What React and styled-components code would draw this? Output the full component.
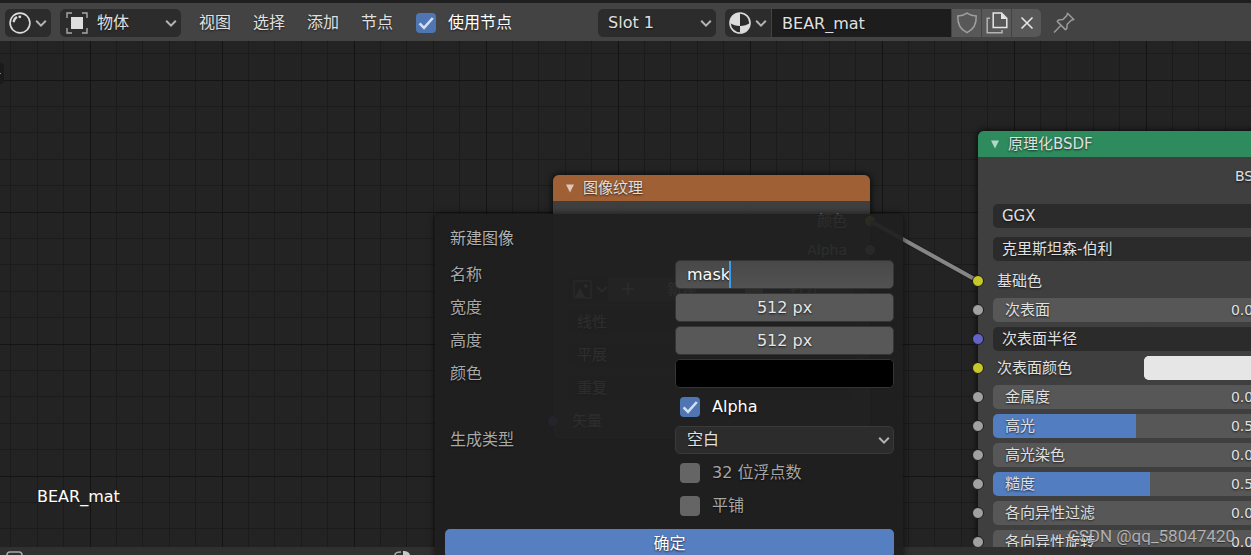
import React, { useState } from 'react';
import styled, { createGlobalStyle } from 'styled-components';

const GlobalStyle = createGlobalStyle`
  *, *::before, *::after {
    box-sizing: border-box;
  }
  body {
    margin: 0;
    background: #1f1f1f;
  }
  body, button, input, select {
    font-family: "DejaVu Sans", "Noto Sans CJK SC", sans-serif;
    font-size: 16px;
    line-height: 20px;
    color: #e0e0e0;
  }
`;

const Page = styled.div`
  position: relative;
  display: flex;
  flex-direction: column;
  height: 100vh;
  padding-top: 3px;
  overflow: hidden;
`;

const Toolbar = styled.header`
  display: flex;
  align-items: center;
  flex: 0 0 38px;
  padding: 2px 5px 0;
  background: #434343;
  text-shadow: 0 1px 2px rgba(0, 0, 0, 0.6);
  white-space: nowrap;
`;

const IconButton = styled.button`
  display: flex;
  align-items: center;
  justify-content: center;
  gap: 4px;
  flex: none;
  width: ${(p) => p.$width || 29}px;
  height: 28px;
  padding: 0;
  border: none;
  border-radius: ${(p) => p.$radius || '0'};
  background: ${(p) => p.$bg || '#585858'};
  color: ${(p) => p.$color || '#dcdcdc'};
`;

const SelectBox = styled.div`
  position: relative;
  flex: none;
  width: ${(p) => p.$width};
  height: 28px;
  margin-left: ${(p) => p.$gap || 0}px;
`;

const Select = styled.select`
  appearance: none;
  width: 100%;
  height: 100%;
  padding: 0 24px 0 ${(p) => p.$indent || 10}px;
  border: 1px solid ${(p) => p.$line || '#2c2c2c'};
  border-radius: 5px;
  background: #2c2c2c;
  text-shadow: inherit;
`;

const SelectArrow = styled.span`
  position: absolute;
  top: 10px;
  right: 4px;
  display: flex;
  pointer-events: none;
`;

const SelectIcon = styled.span`
  position: absolute;
  top: 3px;
  left: 6px;
  display: flex;
  pointer-events: none;
`;

const Menu = styled.nav`
  display: flex;
  gap: 22px;
  margin-left: 18px;
`;

const MenuItem = styled.button`
  padding: 0;
  border: none;
  background: none;
  text-shadow: inherit;
`;

const CheckLabel = styled.label`
  display: flex;
  align-items: center;
  gap: 12px;
  color: ${(p) => (p.$on ? '#ffffff' : '#a6a6a6')};
`;

const ToolbarCheck = styled.div`
  margin-left: 23px;
`;

const CheckBoxWrap = styled.span`
  position: relative;
  display: flex;
  width: 20px;
  height: 20px;
`;

const CheckBox = styled.input`
  appearance: none;
  width: 20px;
  height: 20px;
  margin: 0;
  border-radius: 4px;
  background: #656565;

  &:checked {
    background: #4f76b3;
  }
`;

const CheckMark = styled.svg`
  position: absolute;
  inset: 0;
  pointer-events: none;
`;

const MaterialGroup = styled.div`
  display: flex;
  gap: 1px;
  margin-left: 9px;
`;

const MaterialName = styled.input`
  width: 179px;
  height: 28px;
  padding: 0 10px;
  border: none;
  background: #1d1d1d;
  text-shadow: inherit;
`;

const PinButton = styled(IconButton)`
  margin-left: 8px;
`;

const Canvas = styled.main`
  position: relative;
  flex: 1;
  min-height: 0;
  overflow: hidden;
  background-color: #232323;
  background-image:
    linear-gradient(90deg, #141414 1px, transparent 1px),
    linear-gradient(#141414 1px, transparent 1px),
    linear-gradient(90deg, transparent 26px, #1b1b1b 26px 27px, transparent 27px 52px, #1b1b1b 52px 53px,
      transparent 53px 79px, #1b1b1b 79px 80px, transparent 80px 105px, #1b1b1b 105px 106px, transparent 106px),
    linear-gradient(transparent 26px, #1b1b1b 26px 27px, transparent 27px 52px, #1b1b1b 52px 53px,
      transparent 53px 79px, #1b1b1b 79px 80px, transparent 80px 105px, #1b1b1b 105px 106px, transparent 106px);
  background-size: 132px 132px;
  background-position: 90px 39px;
`;

const SideTab = styled.div`
  position: absolute;
  top: 22px;
  left: 0;
  width: 4px;
  height: 21px;
  border-radius: 0 4px 4px 0;
  background: #1a1a1a;
  overflow: hidden;

  &::after {
    content: "";
    position: absolute;
    top: 10px;
    left: 0;
    width: 1px;
    height: 1px;
    background: #888;
  }
`;

const MaterialCaption = styled.div`
  position: absolute;
  left: 37px;
  bottom: 40px;
  color: #ffffff;
`;

const Wire = styled.svg`
  position: absolute;
  left: 870px;
  top: 179px;
`;

const NodeCard = styled.section`
  position: absolute;
  left: ${(p) => p.$x}px;
  top: ${(p) => p.$y}px;
  width: 317px;
  border-radius: 6px;
  background: rgba(66, 66, 66, 0.93);
  box-shadow: 0 0 6px 1px rgba(0, 0, 0, 0.7);
  font-size: 15px;
  text-shadow: 0 1px 2px rgba(0, 0, 0, 0.7);
`;

const NodeTitle = styled.h2`
  display: flex;
  align-items: center;
  gap: 8px;
  height: 26px;
  margin: 0;
  padding: 0 12px;
  border-radius: 6px 6px 0 0;
  background: ${(p) => p.$color};
  font-size: 15px;
  font-weight: 400;
`;

const NodeBody = styled.div`
  display: flex;
  flex-direction: column;
  gap: 5px;
  padding: 7px 0 16px;
`;

const ImageBody = styled(NodeBody)`
  padding: 8px 0 6px;
`;

const NodeMenus = styled.div`
  display: flex;
  flex-direction: column;
  gap: 9px;
  padding: ${(p) => p.$pad};
`;

const SocketRow = styled.div`
  position: relative;
  display: flex;
  align-items: center;
  justify-content: ${(p) => (p.$output ? 'flex-end' : 'flex-start')};
  height: 24px;
  padding: 0 ${(p) => (p.$output ? 23 : 0)}px 0 ${(p) => p.$indent || 0}px;
`;

const Socket = styled.span`
  position: absolute;
  ${(p) => (p.$output ? 'right' : 'left')}: -6px;
  top: 6px;
  width: 12px;
  height: 12px;
  border: 1px solid #1a1a1a;
  border-radius: 50%;
  background: ${(p) => p.$color};
`;

const NodeSelect = styled.select`
  appearance: none;
  width: 286px;
  height: 24px;
  margin-left: 15px;
  padding: 0 9px;
  border: none;
  border-radius: 5px;
  background: #2b2b2b;
  font-size: 15px;
  text-shadow: inherit;
`;

const Slider = styled.div`
  display: flex;
  align-items: center;
  justify-content: space-between;
  width: 286px;
  height: 24px;
  margin-left: 15px;
  padding: 0 8px 0 12px;
  border-radius: 5px;
  background: linear-gradient(90deg, #527dc0 ${(p) => p.$fill}%, #575757 ${(p) => p.$fill}%);
`;

const LatinText = styled.span`
  font-size: 14px;
`;

const Swatch = styled.input`
  appearance: none;
  width: 135px;
  height: 24px;
  margin-left: auto;
  margin-right: 16px;
  padding: 0;
  border: none;
  border-radius: 5px;
  background: #e6e6e6;

  &::-webkit-color-swatch-wrapper {
    padding: 0;
  }
  &::-webkit-color-swatch {
    border: none;
    border-radius: 5px;
  }
`;

const ImagePicker = styled.div`
  display: flex;
  align-items: center;
  gap: 4px;
  width: 286px;
  height: 24px;
  margin-left: 15px;
  padding-left: 5px;
  border-radius: 5px;
  background: linear-gradient(90deg, #2b2b2b 40px, #575757 40px);
`;

const PickerAction = styled.button`
  display: flex;
  flex: 1;
  align-items: center;
  justify-content: space-between;
  padding: 0 34px 0 10px;
  border: none;
  background: none;
  font-size: 15px;
`;

const Dialog = styled.form`
  position: absolute;
  left: 435px;
  top: 214px;
  display: flex;
  flex-direction: column;
  gap: 4px;
  width: 468px;
  padding: 10px 9px 10px 10px;
  border-radius: 6px;
  background: rgba(31, 31, 31, 0.93);
  box-shadow: 0 0 6px 1px rgba(0, 0, 0, 0.5);
  text-shadow: 0 1px 2px rgba(0, 0, 0, 0.7);
`;

const DialogTitle = styled.h1`
  height: 29px;
  margin: 0 0 3px;
  padding-left: 5px;
  color: #b0b0b0;
  font-size: 16px;
  font-weight: 400;
  line-height: 29px;
`;

const FormRow = styled.div`
  display: grid;
  grid-template-columns: 225px 1fr;
  align-items: center;
  height: 29px;
  padding-left: 5px;
`;

const FormLabel = styled.label`
  color: #a8a8a8;
`;

const FieldBox = styled.div`
  position: relative;
  grid-column: 2;
  height: 29px;
`;

const Field = styled.input`
  width: 100%;
  height: 29px;
  padding: 0 11px;
  border: 1px solid #353535;
  border-radius: 5px;
  outline: none;
  background: ${(p) => (p.$editing ? 'linear-gradient(#484848, #525252)' : '#585858')};
  color: ${(p) => (p.$editing ? '#ffffff' : '#e6e6e6')};
  text-align: ${(p) => (p.$editing ? 'left' : 'center')};
  text-shadow: inherit;
`;

const Caret = styled.span`
  position: absolute;
  top: 1px;
  left: 54px;
  width: 2px;
  height: 27px;
  background: #3d9bea;
`;

const ColorField = styled.input`
  appearance: none;
  display: block;
  width: 100%;
  height: 29px;
  padding: 0;
  border: 1px solid #353535;
  border-radius: 5px;
  background: #000000;

  &::-webkit-color-swatch-wrapper {
    padding: 0;
  }
  &::-webkit-color-swatch {
    border: none;
    border-radius: 4px;
  }
`;

const CheckCell = styled.div`
  grid-column: 2;
  padding-left: 5px;
`;

const ConfirmButton = styled.button`
  height: 29px;
  margin-top: 5px;
  padding: 0;
  border: none;
  border-radius: 5px;
  background: #567fc1;
  color: #ffffff;
  text-shadow: inherit;
`;

const StatusBar = styled.footer`
  display: flex;
  flex: 0 0 8px;
  align-items: flex-end;
  padding-left: 6px;
  gap: 370px;
  background: #303030;
`;

const Watermark = styled.div`
  position: absolute;
  right: 16px;
  bottom: 8px;
  color: rgba(255, 255, 255, 0.6);
  font-family: Roboto, sans-serif;
  font-size: 17px;
  line-height: 22px;
  text-shadow: 0 1px 1px rgba(0, 0, 0, 0.5);
`;

const Chevron = () => (
  <svg width="12" height="9" viewBox="0 0 12 9" fill="none" stroke="#b4b4b4" strokeWidth="2">
    <path d="M1.2 1.8 L6 6.6 L10.8 1.8" />
  </svg>
);

const ShaderIcon = () => (
  <svg width="22" height="22" viewBox="0 0 22 22" fill="none" stroke="#dcdcdc">
    <circle cx="11" cy="11" r="9.9" strokeWidth="1.6" />
    <path d="M4.8 9.2 C5.2 7.6 6 6.4 7.2 5.6" strokeWidth="2.4" strokeLinecap="round" />
    <circle cx="10.8" cy="4.8" r="1.4" fill="#dcdcdc" stroke="none" />
  </svg>
);

const ObjectIcon = () => (
  <svg width="22" height="22" viewBox="0 0 22 22" fill="none">
    <rect x="5" y="5" width="12" height="12" fill="#dedede" />
    <path d="M1 6 V1 H6 M16 1 H21 V6 M21 16 V21 H16 M6 21 H1 V16" stroke="#a8a8a8" strokeWidth="1.4" />
  </svg>
);

const MaterialIcon = () => (
  <svg width="22" height="22" viewBox="0 0 22 22" fill="none">
    <circle cx="11" cy="11" r="10" stroke="#dcdcdc" strokeWidth="1.6" />
    <path d="M11 1 A10 10 0 0 0 1 11 C4 13 7 14 11 14 Z" fill="#dcdcdc" />
    <path d="M11 14 C15 14 18 13 21 11 A10 10 0 0 1 11 21 Z" fill="#dcdcdc" />
  </svg>
);

const ShieldIcon = () => (
  <svg width="22" height="22" viewBox="0 0 22 22" fill="none" stroke="#a0a0a0" strokeWidth="1.5">
    <path d="M11 1.2 C8.5 3 5.2 4 1.8 4 C1.4 12 4.5 17.6 11 20.6 C17.5 17.6 20.6 12 20.2 4 C16.8 4 13.5 3 11 1.2 Z" />
  </svg>
);

const CopyIcon = () => (
  <svg width="22" height="22" viewBox="0 0 22 22" fill="none" strokeWidth="1.5">
    <path d="M4 6.2 H1.2 V20.8 H16 V18" stroke="#b4b4b4" />
    <path d="M7.2 1 H15.5 L20.8 6.2 V15.4 H7.2 Z" stroke="#e6e6e6" />
    <path d="M15 1 L21 7 H15 Z" fill="#e6e6e6" />
  </svg>
);

const CloseIcon = () => (
  <svg width="14" height="14" viewBox="0 0 14 14" stroke="#e6e6e6" strokeWidth="1.6">
    <path d="M1.5 1.5 L12.5 12.5 M12.5 1.5 L1.5 12.5" />
  </svg>
);

const PinIcon = () => (
  <svg width="22" height="22" viewBox="0 0 22 22" fill="none" stroke="#9a9a9a" strokeWidth="1.5" strokeLinejoin="round">
    <path d="M14.5 1.2 L20.8 7.5 L18.3 8.2 L14.2 12.3 L13.8 16.6 L12.4 17.6 L4.2 9.4 L5.4 8 L9.8 7.6 L13.8 3.6 Z" />
    <path d="M7.6 13.8 L1 20.6" />
  </svg>
);

const PictureIcon = () => (
  <svg width="19" height="19" viewBox="0 0 19 19" fill="none">
    <rect x="1" y="1" width="17" height="17" stroke="#b8b8b8" strokeWidth="1.2" />
    <path d="M2 17 L7 8 L12 17 Z" fill="#b8b8b8" />
    <circle cx="13" cy="6" r="2" fill="#b8b8b8" />
  </svg>
);

const PlusIcon = () => (
  <svg width="12" height="12" viewBox="0 0 12 12" stroke="#d8d8d8" strokeWidth="1.4">
    <path d="M6 0 V12 M0 6 H12" />
  </svg>
);

const FolderIcon = () => (
  <svg width="18" height="15" viewBox="0 0 18 15" fill="#c0c0c0">
    <path d="M0 1 H7 L9 3 H18 V15 H0 Z" />
  </svg>
);

const TitleArrow = () => (
  <svg width="10" height="9" viewBox="0 0 10 9">
    <path d="M1 0.5 H9 L5 8.5 Z" fill="#ffffff" opacity="0.65" />
  </svg>
);

const Check = ({ label, defaultChecked }) => {
  const [on, setOn] = useState(Boolean(defaultChecked));

  return (
    <CheckLabel $on={on}>
      <CheckBoxWrap>
        <CheckBox type="checkbox" checked={on} onChange={(e) => setOn(e.target.checked)} />
        {on && (
          <CheckMark width="20" height="20" viewBox="0 0 20 20" fill="none" stroke="#d3deef" strokeWidth="2.6">
            <path d="M3.6 10.4 L8 14.8 L16.8 5" />
          </CheckMark>
        )}
      </CheckBoxWrap>
      {label}
    </CheckLabel>
  );
};

const GREY = '#a1a1a1';
const YELLOW = '#c7c729';
const PURPLE = '#6363c7';

const sliders = [
  { label: '金属度', value: '0.000', fill: 0 },
  { label: '高光', value: '0.500', fill: 50 },
  { label: '高光染色', value: '0.000', fill: 0 },
  { label: '糙度', value: '0.552', fill: 55 },
  { label: '各向异性过滤', value: '0.000', fill: 0 },
  { label: '各向异性旋转', value: '0.000', fill: 0 },
];

const SliderRow = ({ label, value, fill }) => (
  <SocketRow>
    <Socket $color={GREY} />
    <Slider $fill={fill}>
      <span>{label}</span>
      <LatinText>{value}</LatinText>
    </Slider>
  </SocketRow>
);

const ImageNode = () => (
  <NodeCard $x={553} $y={134}>
    <NodeTitle $color="#a06035">
      <TitleArrow />
      图像纹理
    </NodeTitle>
    <ImageBody>
      <SocketRow $output>
        颜色
        <Socket $output $color={YELLOW} />
      </SocketRow>
      <SocketRow $output>
        <LatinText>Alpha</LatinText>
        <Socket $output $color={GREY} />
      </SocketRow>
      <NodeMenus $pad="10px 0 4px">
        <ImagePicker>
          <PictureIcon />
          <Chevron />
          <PickerAction type="button"><PlusIcon />新建</PickerAction>
          <PickerAction type="button"><FolderIcon />打开</PickerAction>
        </ImagePicker>
        <NodeSelect aria-label="插值"><option>线性</option></NodeSelect>
        <NodeSelect aria-label="投射"><option>平展</option></NodeSelect>
        <NodeSelect aria-label="扩展"><option>重复</option></NodeSelect>
      </NodeMenus>
      <SocketRow $indent={19}>
        <Socket $color={PURPLE} />
        矢量
      </SocketRow>
    </ImageBody>
  </NodeCard>
);

const PrincipledNode = () => (
  <NodeCard $x={978} $y={90}>
    <NodeTitle $color="#2e8b5e">
      <TitleArrow />
      原理化BSDF
    </NodeTitle>
    <NodeBody>
      <SocketRow $output><LatinText>BSDF</LatinText></SocketRow>
      <NodeMenus $pad="11px 0 3px">
        <NodeSelect aria-label="分布"><option>GGX</option></NodeSelect>
        <NodeSelect aria-label="次表面方法"><option>克里斯坦森-伯利</option></NodeSelect>
      </NodeMenus>
      <SocketRow $indent={19}>
        <Socket $color={YELLOW} />
        基础色
      </SocketRow>
      <SliderRow label="次表面" value="0.000" fill={0} />
      <SocketRow>
        <Socket $color={PURPLE} />
        <NodeSelect aria-label="次表面半径"><option>次表面半径</option></NodeSelect>
      </SocketRow>
      <SocketRow $indent={19}>
        <Socket $color={YELLOW} />
        <label htmlFor="subsurface-color">次表面颜色</label>
        <Swatch id="subsurface-color" type="color" defaultValue="#e6e6e6" />
      </SocketRow>
      {sliders.map((s) => (
        <SliderRow key={s.label} {...s} />
      ))}
    </NodeBody>
  </NodeCard>
);

const NewImageDialog = () => {
  const [name, setName] = useState('mask');

  return (
    <Dialog onSubmit={(e) => e.preventDefault()}>
      <DialogTitle>新建图像</DialogTitle>
      <FormRow>
        <FormLabel htmlFor="image-name">名称</FormLabel>
        <FieldBox>
          <Field $editing id="image-name" value={name} onChange={(e) => setName(e.target.value)} />
          <Caret />
        </FieldBox>
      </FormRow>
      <FormRow>
        <FormLabel htmlFor="image-width">宽度</FormLabel>
        <Field id="image-width" defaultValue="512 px" />
      </FormRow>
      <FormRow>
        <FormLabel htmlFor="image-height">高度</FormLabel>
        <Field id="image-height" defaultValue="512 px" />
      </FormRow>
      <FormRow>
        <FormLabel htmlFor="image-color">颜色</FormLabel>
        <ColorField id="image-color" type="color" defaultValue="#000000" />
      </FormRow>
      <FormRow>
        <CheckCell><Check label="Alpha" defaultChecked /></CheckCell>
      </FormRow>
      <FormRow>
        <FormLabel htmlFor="image-type">生成类型</FormLabel>
        <SelectBox $width="100%">
          <Select id="image-type" $line="#3a3a3a" $indent={11}><option>空白</option></Select>
          <SelectArrow><Chevron /></SelectArrow>
        </SelectBox>
      </FormRow>
      <FormRow>
        <CheckCell><Check label="32 位浮点数" /></CheckCell>
      </FormRow>
      <FormRow>
        <CheckCell><Check label="平铺" /></CheckCell>
      </FormRow>
      <ConfirmButton type="submit">确定</ConfirmButton>
    </Dialog>
  );
};

const App = () => (
  <Page>
    <GlobalStyle />
    <Toolbar>
      <IconButton $width={46} $radius="5px" $bg="#2c2c2c" aria-label="编辑器类型">
        <ShaderIcon />
        <Chevron />
      </IconButton>
      <SelectBox $width="121px" $gap={9}>
        <Select $indent={36} aria-label="着色器类型"><option>物体</option></Select>
        <SelectIcon><ObjectIcon /></SelectIcon>
        <SelectArrow><Chevron /></SelectArrow>
      </SelectBox>
      <Menu>
        <MenuItem>视图</MenuItem>
        <MenuItem>选择</MenuItem>
        <MenuItem>添加</MenuItem>
        <MenuItem>节点</MenuItem>
      </Menu>
      <ToolbarCheck><Check label="使用节点" defaultChecked /></ToolbarCheck>
      <SelectBox $width="118px" $gap={86}>
        <Select $indent={9} aria-label="材质槽"><option>Slot 1</option></Select>
        <SelectArrow><Chevron /></SelectArrow>
      </SelectBox>
      <MaterialGroup>
        <IconButton $width={46} $radius="5px 0 0 5px" $bg="#2c2c2c" aria-label="浏览材质">
          <MaterialIcon />
          <Chevron />
        </IconButton>
        <MaterialName aria-label="材质名称" defaultValue="BEAR_mat" />
        <IconButton aria-label="伪用户"><ShieldIcon /></IconButton>
        <IconButton aria-label="新建材质"><CopyIcon /></IconButton>
        <IconButton $radius="0 5px 5px 0" aria-label="断开"><CloseIcon /></IconButton>
      </MaterialGroup>
      <PinButton $bg="transparent" aria-label="固定"><PinIcon /></PinButton>
    </Toolbar>
    <Canvas>
      <SideTab />
      <MaterialCaption>BEAR_mat</MaterialCaption>
      <ImageNode />
      <Wire width="109" height="64" viewBox="0 0 109 64" fill="none">
        <path d="M0 1 L108 61" stroke="#1a1a1a" strokeOpacity="0.6" strokeWidth="6" />
        <path d="M0 1 L108 61" stroke="#868686" strokeWidth="4" />
      </Wire>
      <PrincipledNode />
    </Canvas>
    <StatusBar>
      <svg width="18" height="4" viewBox="0 0 18 4" fill="none" stroke="#a8a8a8" strokeWidth="1.6">
        <path d="M1 4 C1 2 2 1 4 1 H13 C15 1 16 2 16 4" />
      </svg>
      <svg width="18" height="4" viewBox="0 0 18 4" fill="none">
        <path d="M1 4 C1 2 3 1 7 1" stroke="#a8a8a8" strokeWidth="1.6" />
        <path d="M9 0 C13 0 15 1 16 4 H9 Z" fill="#c8c8c8" />
      </svg>
    </StatusBar>
    <NewImageDialog />
    <Watermark>CSDN @qq_58047420</Watermark>
  </Page>
);

export default App;
